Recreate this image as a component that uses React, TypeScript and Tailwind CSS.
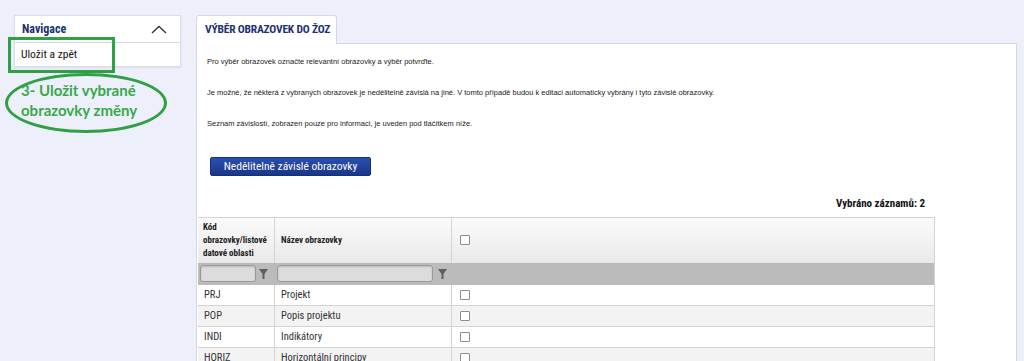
import React from 'react';

const rows = [
  { code: 'PRJ', name: 'Projekt' },
  { code: 'POP', name: 'Popis projektu' },
  { code: 'INDI', name: 'Indikátory' },
  { code: 'HORIZ', name: 'Horizontální principy' },
];

const Funnel = () => (
  <svg width="9" height="12" viewBox="0 0 9 12" className="shrink-0">
    <polygon points="0,1 9,1 5.5,6 5.5,11 3.5,11 3.5,6" fill="#5f5f5f" />
  </svg>
);

const Checkbox = () => (
  <div className="w-[10px] h-[10px] border border-[#8c8c8c] bg-white rounded-[1px]" />
);

const FilterInput = ({ w }: { w: string }) => (
  <div className={`${w} h-[17px] rounded-[3px] border border-[#9a9a9a] bg-[#dcdcdc] shadow-[inset_0_1px_2px_rgba(0,0,0,0.15)]`} />
);

export default function App() {
  return (
    <div className="relative h-[361px] w-[1024px] overflow-hidden bg-[#edf0fa] font-['Liberation_Sans',Arial,sans-serif]">
      <div className="flex items-start pt-[15px]">
        {/* Navigation */}
        <aside className="ml-[14px] w-[167px] bg-white border border-[#dcdfe6] shadow-[0_1px_2px_rgba(0,0,0,0.08)]">
          <div className="h-[27px] flex items-center justify-between pl-[7px] pr-[13px] border-b border-[#d6d9e0]">
            <span className="font-['Roboto_Condensed','Liberation_Sans_Narrow','DejaVu_Sans_Condensed',Roboto,sans-serif] font-bold text-[12px] text-[#1d3370]">Navigace</span>
            <svg width="16" height="9" viewBox="0 0 16 9">
              <polyline points="1,8 8,1.5 15,8" fill="none" stroke="#333" strokeWidth="1.3" />
            </svg>
          </div>
          <div className="h-[23px] flex items-center pl-[6px] text-[11.5px] text-[#111] font-['Roboto_Condensed','Liberation_Sans_Narrow','DejaVu_Sans_Condensed',Roboto,sans-serif]">
            Uložit a zpět
          </div>
        </aside>

        {/* Main panel */}
        <main className="ml-[15px] w-[821px]">
          <div className="relative z-10 -mb-px w-[141px] h-[29px] bg-white border border-b-0 border-[#d6d9e0] rounded-t-[3px] flex items-center pl-[8px]">
            <span className="font-['Roboto_Condensed','Liberation_Sans_Narrow','DejaVu_Sans_Condensed',Roboto,sans-serif] font-bold text-[11.5px] text-[#1d3370] tracking-[-0.2px]">
              VÝBĚR OBRAZOVEK DO ŽOZ
            </span>
          </div>
          <div className="bg-white border border-[#d6d9e0] h-[330px]">
            <div className="pl-[10px] pt-[13px] text-[7.5px] text-[#1a1a1a] leading-[10px]">
              <p>Pro výběr obrazovek označte relevantní obrazovky a výběr potvrďte.</p>
              <p className="mt-[21px]">
                Je možné, že některá z vybraných obrazovek je nedělitelně závislá na jiné. V tomto případě budou k editaci automaticky vybrány i tyto závislé obrazovky.
              </p>
              <p className="mt-[21px]">Seznam závislostí, zobrazen pouze pro informaci, je uveden pod tlačítkem níže.</p>
            </div>
            <div className="pl-[13px] mt-[28px]">
              <button className="h-[19px] w-[161px] rounded-[2px] bg-gradient-to-b from-[#2b4fb0] to-[#1a3688] border border-[#15307a] text-white text-[11.5px] font-['Roboto_Condensed','Liberation_Sans_Narrow','DejaVu_Sans_Condensed',Roboto,sans-serif] flex items-center justify-center">
                Nedělitelně závislé obrazovky
              </button>
            </div>
            <div className="w-[737px] mt-[20px] flex justify-end pr-[9px] text-[11px] font-bold text-[#111] font-['Roboto_Condensed','Liberation_Sans_Narrow','DejaVu_Sans_Condensed',Roboto,sans-serif]">
              Vybráno záznamů: 2
            </div>
            <div className="ml-px mt-[4px] w-[737px] border-r border-t border-[#d4d4d4] font-['Roboto_Condensed','Liberation_Sans_Narrow','DejaVu_Sans_Condensed',Roboto,sans-serif]">
              <div className="grid grid-cols-[77px_177px_1fr] h-[45px] bg-gradient-to-b from-[#fbfbfb] to-[#e9e9e9] text-[9px] font-bold text-[#222] leading-[13px]">
                <div className="flex items-center pl-[5px] border-r border-[#d4d4d4]">
                  <span>Kód<br />obrazovky/listové<br />datové oblasti</span>
                </div>
                <div className="flex items-center pl-[6px] border-r border-[#d4d4d4]">Název obrazovky</div>
                <div className="flex items-center pl-[8px]"><Checkbox /></div>
              </div>
              <div className="grid grid-cols-[77px_177px_1fr] h-[22px] bg-[#bbbbbb] items-center">
                <div className="flex items-center gap-[3px] pl-[2px]">
                  <FilterInput w="w-[56px]" />
                  <Funnel />
                </div>
                <div className="flex items-center gap-[5px] pl-[2px]">
                  <FilterInput w="w-[156px]" />
                  <Funnel />
                </div>
                <div />
              </div>
              {rows.map((r, i) => (
                <div
                  key={r.code}
                  className={`grid grid-cols-[77px_177px_1fr] h-[21px] border-b border-[#d4d4d4] text-[10.5px] text-[#333] ${i % 2 === 1 ? 'bg-[#f3f3f3]' : 'bg-white'}`}
                >
                  <div className="flex items-center pl-[6px] border-r border-[#d4d4d4]">{r.code}</div>
                  <div className="flex items-center pl-[6px] border-r border-[#d4d4d4]">{r.name}</div>
                  <div className="flex items-center pl-[8px]"><Checkbox /></div>
                </div>
              ))}
            </div>
          </div>
        </main>
      </div>

      {/* Annotation overlays */}
      <div className="absolute left-[8px] top-[37px] w-[107px] h-[36px] border-[3px] border-[#2fa043]" />
      <div className="absolute left-[5px] top-[73px] w-[162px] h-[60px] rounded-[50%] border-[3px] border-[#2fa043]" />
      <div className="absolute left-[21px] top-[80px] text-[15px] leading-[20px] font-bold text-[#3aa84b] font-['Lato',sans-serif]">
        3- Uložit vybrané<br />obrazovky změny
      </div>
    </div>
  );
}
